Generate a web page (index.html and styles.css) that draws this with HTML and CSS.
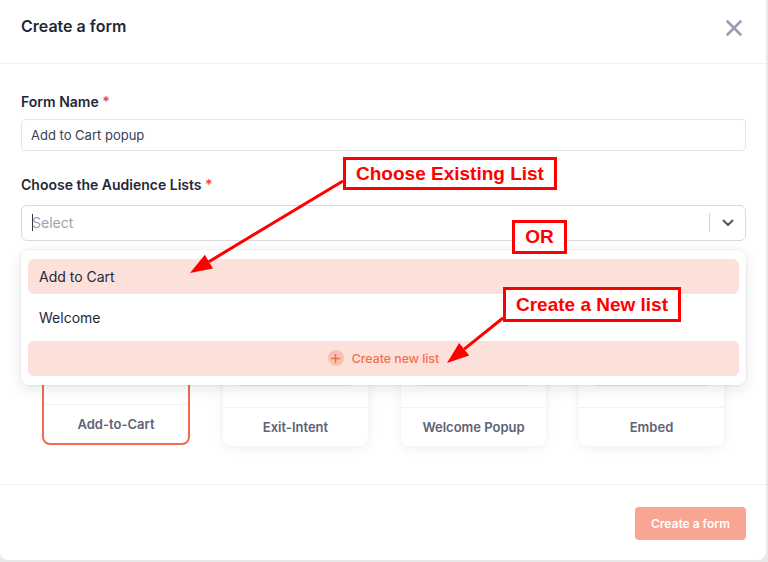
FILE: index.html
```html
<!DOCTYPE html>
<html>
<head>
    <title>Create a form</title>
    <link rel="stylesheet" href="styles.css">
</head>
<body>
    <div class="modal">
        <div class="modal-header">
            <h2>Create a form</h2>
            <button type="button" class="close-btn">
                <svg width="16" height="16" viewBox="0 0 16 16"><path d="M1.5 1.5 L14.5 14.5 M14.5 1.5 L1.5 14.5" stroke="#9b9db0" stroke-width="2.6" stroke-linecap="round"/></svg>
            </button>
        </div>

        <div class="modal-body">
            <label class="field-label">Form Name <span class="req">*</span></label>
            <div class="text-input">Add to Cart popup</div>

            <label class="field-label">Choose the Audience Lists <span class="req">*</span></label>
            <div class="select-wrap">
                <div class="select-box">
                    <span class="placeholder"><span class="caret"></span>Select</span>
                    <span class="select-sep"></span>
                    <span class="chevron">
                        <svg width="12" height="8" viewBox="0 0 12 8"><path d="M1.5 1.5 L6 6 L10.5 1.5" fill="none" stroke="#555" stroke-width="2" stroke-linecap="round" stroke-linejoin="round"/></svg>
                    </span>
                </div>

                <!-- open menu of the select -->
                <div class="dropdown">
                    <div class="option active">Add to Cart</div>
                    <div class="option">Welcome</div>
                    <div class="option create">
                        <span class="plus-icon">
                            <svg width="9" height="9" viewBox="0 0 9 9"><path d="M4.5 0.5 V8.5 M0.5 4.5 H8.5" stroke="#f26f50" stroke-width="1.5" stroke-linecap="round"/></svg>
                        </span>
                        Create new list
                    </div>
                </div>
            </div>

            <div class="templates">
                <div class="template selected">
                    <div class="thumb"><div class="thumb-img"></div></div>
                    <div class="template-name">Add-to-Cart</div>
                </div>
                <div class="template">
                    <div class="thumb"><div class="thumb-img"></div></div>
                    <div class="template-name">Exit-Intent</div>
                </div>
                <div class="template">
                    <div class="thumb"><div class="thumb-img"></div></div>
                    <div class="template-name">Welcome Popup</div>
                </div>
                <div class="template">
                    <div class="thumb"><div class="thumb-img"></div></div>
                    <div class="template-name">Embed</div>
                </div>
            </div>
        </div>

        <div class="modal-footer">
            <button type="button" class="primary-btn">Create a form</button>
        </div>
    </div>

    <!-- red annotations drawn on top of the screenshot -->
    <div class="note note-existing">Choose Existing List</div>
    <div class="note note-or">OR</div>
    <div class="note note-new">Create a New list</div>

    <svg class="arrows" width="768" height="562" viewBox="0 0 768 562">
        <line x1="343" y1="181" x2="208.9" y2="261.7" stroke="#ff0000" stroke-width="3"/>
        <polygon points="190,273 213,268.6 204.8,254.8" fill="#ff0000"/>
        <line x1="503" y1="318" x2="464.2" y2="349.2" stroke="#ff0000" stroke-width="3"/>
        <polygon points="447,363 469.2,355.4 459.2,343" fill="#ff0000"/>
    </svg>
</body>
</html>
```

FILE: styles.css
```css
body {
    margin: 0;
    background-color: #e8e8ea;
    font-family: Inter, "Noto Sans", sans-serif;
    color: #1f2937;
}

.modal {
    width: 766px;
    height: 560px;
    background-color: #ffffff;
    border-radius: 0 0 8px 8px;
    display: flex;
    flex-direction: column;
}

/* header */
.modal-header {
    height: 64px;
    box-sizing: border-box;
    border-bottom: 1px solid #f0f1f3;
    padding: 14px 20px 0 21px;
    display: flex;
    justify-content: space-between;
    align-items: flex-start;
}

.modal-header h2 {
    margin: 0;
    font-size: 16px;
    line-height: 24px;
    font-weight: 600;
    color: #1f2937;
}

.close-btn {
    width: 24px;
    height: 24px;
    margin-top: 2px;
    padding: 0;
    border: none;
    background: none;
    display: flex;
    align-items: center;
    justify-content: center;
}

/* body */
.modal-body {
    padding: 28px 20px 38px 21px;
    flex: 1;
}

.field-label {
    display: block;
    font-size: 14px;
    line-height: 20px;
    font-weight: 600;
    color: #1f2937;
    margin-bottom: 7px;
}

.req {
    color: #ef4444;
}

.text-input {
    height: 32px;
    box-sizing: border-box;
    border: 1px solid #e3e5e9;
    border-radius: 4px;
    padding: 0 9px;
    display: flex;
    align-items: center;
    font-size: 13px;
    color: #374151;
    margin-bottom: 24px;
}

.select-wrap {
    position: relative;
    margin-top: 10px;
}

.select-box {
    height: 36px;
    box-sizing: border-box;
    border: 1px solid #d8dade;
    border-radius: 6px;
    display: flex;
    align-items: center;
    padding-left: 10px;
}

.placeholder {
    flex: 1;
    font-size: 14px;
    color: #9ca3af;
    display: flex;
    align-items: center;
}

.caret {
    width: 1px;
    height: 17px;
    background-color: #333;
    margin-right: -1px;
}

.select-sep {
    width: 1px;
    height: 19px;
    background-color: #d4d4d8;
}

.chevron {
    width: 35px;
    display: flex;
    justify-content: center;
    align-items: center;
}

.dropdown {
    position: absolute;
    top: 45px;
    left: 0;
    right: 0;
    padding: 9px 7px;
    background-color: #ffffff;
    border-radius: 8px;
    box-shadow: 0 0 0 1px rgba(0, 0, 0, 0.04), 0 4px 14px rgba(0, 0, 0, 0.1);
    display: flex;
    flex-direction: column;
    gap: 6px;
    z-index: 2;
}

.option {
    height: 35px;
    border-radius: 6px;
    padding: 0 11px;
    display: flex;
    align-items: center;
    font-size: 14px;
    color: #1f2937;
}

.option.active {
    background-color: #fce0da;
}

.option.create {
    background-color: #fce0da;
    justify-content: center;
    gap: 8px;
    font-size: 12.3px;
    font-weight: 500;
    color: #f26f50;
}

.plus-icon {
    width: 16px;
    height: 16px;
    border-radius: 50%;
    background-color: #f8c0b2;
    display: flex;
    align-items: center;
    justify-content: center;
}

/* form templates */
.templates {
    display: grid;
    grid-template-columns: 148px repeat(3, 145px);
    column-gap: 33px;
    align-items: end;
    margin-top: 49px;
    margin-left: 21px;
}

.template {
    height: 155px;
    box-sizing: border-box;
    border-radius: 8px;
    background-color: #ffffff;
    box-shadow: 0 2px 12px rgba(0, 0, 0, 0.07);
    display: flex;
    flex-direction: column;
}

.template.selected {
    border: 2px solid #f26b4c;
    margin-bottom: 1px;
    box-shadow: none;
}

.thumb {
    flex: 1;
    padding: 12px 14px 21px;
    display: flex;
}

.thumb-img {
    flex: 1;
    border: 1px solid #ececef;
    border-radius: 4px;
}

.selected .thumb {
    padding: 12px 13px 27px;
}

.selected .thumb-img {
    border: none;
    background-color: #fbe1db;
}

.template-name {
    height: 38px;
    border-top: 1px solid #f2f2f4;
    display: flex;
    align-items: center;
    justify-content: center;
    font-size: 13px;
    font-weight: 600;
    color: #5d6377;
}

/* footer */
.modal-footer {
    border-top: 1px solid #f0f1f3;
    padding: 22px 20px 0 0;
    height: 77px;
    box-sizing: border-box;
    display: flex;
    justify-content: flex-end;
    align-items: flex-start;
}

.primary-btn {
    height: 33px;
    width: 111px;
    border: none;
    border-radius: 4px;
    background-color: #f8a591;
    color: #ffffff;
    font-family: Inter, "Noto Sans", sans-serif;
    font-size: 12px;
    font-weight: 600;
}

/* annotations */
.note {
    position: absolute;
    box-sizing: border-box;
    border: 3px solid #ff0000;
    background-color: #ffffff;
    color: #ff0000;
    font-family: "Liberation Sans", Arial, sans-serif;
    font-weight: bold;
    font-size: 19px;
    display: flex;
    align-items: center;
    justify-content: center;
    z-index: 5;
}

.note-existing {
    left: 343px;
    top: 157px;
    width: 214px;
    height: 33px;
}

.note-or {
    left: 512px;
    top: 220px;
    width: 55px;
    height: 34px;
}

.note-new {
    left: 503px;
    top: 287px;
    width: 178px;
    height: 35px;
}

.arrows {
    position: absolute;
    left: 0;
    top: 0;
    z-index: 4;
    pointer-events: none;
}
```
